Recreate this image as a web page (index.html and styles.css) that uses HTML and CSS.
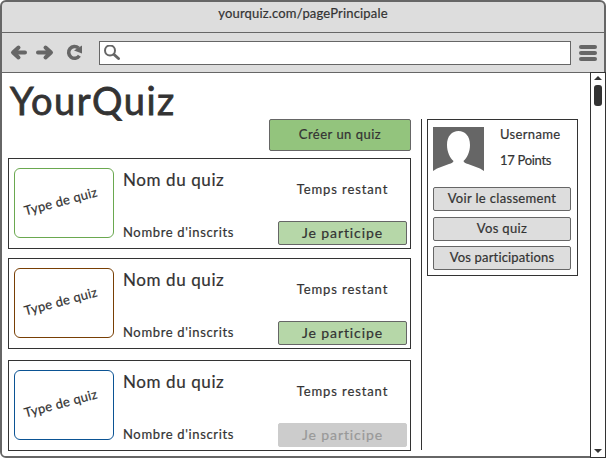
FILE: index.html
```html
<!DOCTYPE html>
<html lang="fr">
<head>
<meta charset="utf-8">
<title>YourQuiz</title>
<link rel="stylesheet" href="styles.css">
</head>
<body>
<div class="browser">
  <header class="titlebar"><span class="url">yourquiz.com/pagePrincipale</span></header>
  <nav class="toolbar">
    <svg class="nav-icons" width="84" height="20" viewBox="0 0 84 20">
      <g fill="none" stroke="#666" stroke-width="4" stroke-linecap="round" stroke-linejoin="round">
        <path d="M9.500 4.500L4 9.500L9.500 14.500M5 9.500H16"/>
        <path d="M36.500 4.500L42 9.500L36.500 14.500M41 9.500H29"/>
        <path stroke-width="3.600" stroke-linecap="butt" d="M69.500 5A5.900 5.900 0 1 0 70.400 12.800"/>
      </g>
      <path fill="#666" d="M73 2.500V10.500L65 7.500Z"/>
    </svg>
    <div class="address">
      <svg width="18" height="18" viewBox="0 0 18 18" fill="none" stroke="#666">
        <circle cx="6" cy="5.500" r="5" stroke-width="2"/>
        <path d="M10 9.500L14.500 13.500" stroke-width="3" stroke-linecap="round"/>
      </svg>
    </div>
    <div class="menu"><i></i><i></i><i></i></div>
  </nav>
  <div class="viewport">
    <main class="page">
      <h1><span>YourQuiz</span></h1>
      <div class="columns">
        <section class="quizzes">
          <button class="create">Créer un quiz</button>
          <article class="card">
            <div class="type green"><span>Type de quiz</span></div>
            <div class="info"><h2>Nom du quiz</h2><p>Nombre d'inscrits</p></div>
            <div class="action"><p>Temps restant</p><button class="join">Je participe</button></div>
          </article>
          <article class="card">
            <div class="type brown"><span>Type de quiz</span></div>
            <div class="info"><h2>Nom du quiz</h2><p>Nombre d'inscrits</p></div>
            <div class="action"><p>Temps restant</p><button class="join">Je participe</button></div>
          </article>
          <article class="card last">
            <div class="type blue"><span>Type de quiz</span></div>
            <div class="info"><h2>Nom du quiz</h2><p>Nombre d'inscrits</p></div>
            <div class="action"><p>Temps restant</p><button class="join" disabled>Je participe</button></div>
          </article>
        </section>
        <div class="divider"></div>
        <aside class="profile">
          <div class="user">
            <svg width="51" height="44" viewBox="0 0 51 44"><path fill="#666" d="M0 0H51V44L47 41.500L35 37Q31 36 30.500 34C34 31 37 25 37 18C37 9 32 4 25.500 4S14 9 14 18C14 25 17 31 20.500 34Q20 36 16 37L4 41.500L0 44Z"/></svg>
            <div class="who"><span class="name">Username</span><span class="points">17 Points</span></div>
          </div>
          <button class="rank">Voir le classement</button>
          <button class="mine">Vos quiz</button>
          <button class="joined">Vos participations</button>
        </aside>
      </div>
    </main>
    <div class="scrollbar">
      <svg width="8" height="4" viewBox="0 0 8 4"><path fill="#333" d="M0 4L4 0L8 4Z"/></svg>
      <div class="thumb"></div>
      <svg class="down" width="8" height="4" viewBox="0 0 8 4"><path fill="#333" d="M0 0L4 4L8 0Z"/></svg>
    </div>
  </div>
</div>
</body>
</html>
```
FILE: styles.css
```css
* { box-sizing: border-box; }
body {
  margin: 0;
  background: #fff;
  color: #333;
  font: 13px/16px Lato, "Open Sans", sans-serif;
  -webkit-text-stroke: 0.2px currentColor;
}
h1, h2, p { margin: 0; font-weight: 400; }
button {
  display: block;
  margin: 0;
  padding: 0 0 2px;
  border: 1px solid #666;
  border-radius: 2px;
  background: #ddd;
  color: #333;
  font: inherit;
  white-space: nowrap;
}
svg { display: block; flex: none; }
.browser {
  display: flex;
  flex-direction: column;
  width: 606px;
  height: 458px;
  border: 2px solid #666;
  border-radius: 6px;
  background: #ddd;
}
.titlebar {
  height: 31px;
  padding-top: 3px;
  border-bottom: 1px solid #666;
  text-align: center;
}
.url { letter-spacing: 0.17px; }
.toolbar {
  display: flex;
  align-items: center;
  height: 40px;
  padding-left: 7px;
  border-bottom: 1px solid #666;
}
.address {
  width: 472px;
  height: 24px;
  margin-left: 6px;
  padding: 3px 4px;
  border: 1px solid #666;
  background: #fff;
}
.menu { display: grid; gap: 2px; margin-left: 8px; }
.menu i { width: 18px; height: 4px; border-radius: 2px; background: #666; }
.viewport {
  display: flex;
  height: 383px;
  border-radius: 0 0 0 4px;
  background: #fff;
}
.page { width: 588px; padding-left: 6px; }
h1 { height: 46px; padding-left: 2px; font-size: 38px; line-height: 54px; letter-spacing: 1.5px; white-space: nowrap; -webkit-text-stroke: 0.8px; }
.columns { display: flex; }
.quizzes { display: flex; flex-direction: column; width: 403px; }
.create { width: 142px; height: 32px; margin-left: auto; background: #93c47d; letter-spacing: 0.5px; }
.card {
  display: flex;
  height: 91px;
  margin-top: 9px;
  padding: 9px 3px 3px 5px;
  border: 1px solid #333;
}
.create + .card { margin-top: 7px; }
.card.last { margin-top: 11px; }
.type {
  display: flex;
  align-items: center;
  justify-content: center;
  width: 100px;
  height: 70px;
  border: 1px solid;
  border-radius: 6px;
}
.type span { color: #333; letter-spacing: 0.3px; transform: translate(-3px, -2px) rotate(-15deg); }
.green { border-color: #6aa84f; }
.brown { border-color: #783f04; }
.blue { border-color: #0b5394; }
.info { display: flex; flex-direction: column; justify-content: space-between; width: 164px; padding: 1px 0 5px 9px; }
h2 { font-size: 17px; line-height: 22px; letter-spacing: 0.6px; }
.info p { letter-spacing: 0.65px; }
.action { display: flex; flex-direction: column; justify-content: space-between; width: 129px; }
.action p { padding-top: 13px; text-align: center; letter-spacing: 0.9px; }
.join { height: 24px; padding-bottom: 1px; background: #b6d7a8; font-size: 14px; letter-spacing: 0.9px; }
.join:disabled { border-color: #ccc; background: #ccc; color: #999; }
.divider { width: 1px; height: 331px; margin-left: 10px; background: #333; }
.profile { width: 151px; height: 157px; margin-left: 5px; padding: 7px 6px 0 5px; border: 1px solid #333; }
.user { display: flex; height: 60px; }
.who { display: grid; align-content: start; gap: 10px; margin-top: -1px; padding-left: 16px; white-space: nowrap; }
.name { letter-spacing: 0.35px; }
.points { letter-spacing: -0.3px; }
.profile button { width: 138px; height: 24px; letter-spacing: 0.33px; }
.profile .mine { margin: 6px 0 5px; }
.profile .joined { letter-spacing: 0.17px; }
.scrollbar {
  display: flex;
  flex-direction: column;
  align-items: center;
  flex: none;
  width: 16px;
  height: 386px;
  margin: -1px -2px -2px 0;
  padding: 3px 0 4px;
  border: 1px solid #333;
  background: #fff;
}
.thumb { width: 8px; height: 21px; margin-top: 5px; border-radius: 3px; background: #333; }
.down { margin-top: auto; }
```
